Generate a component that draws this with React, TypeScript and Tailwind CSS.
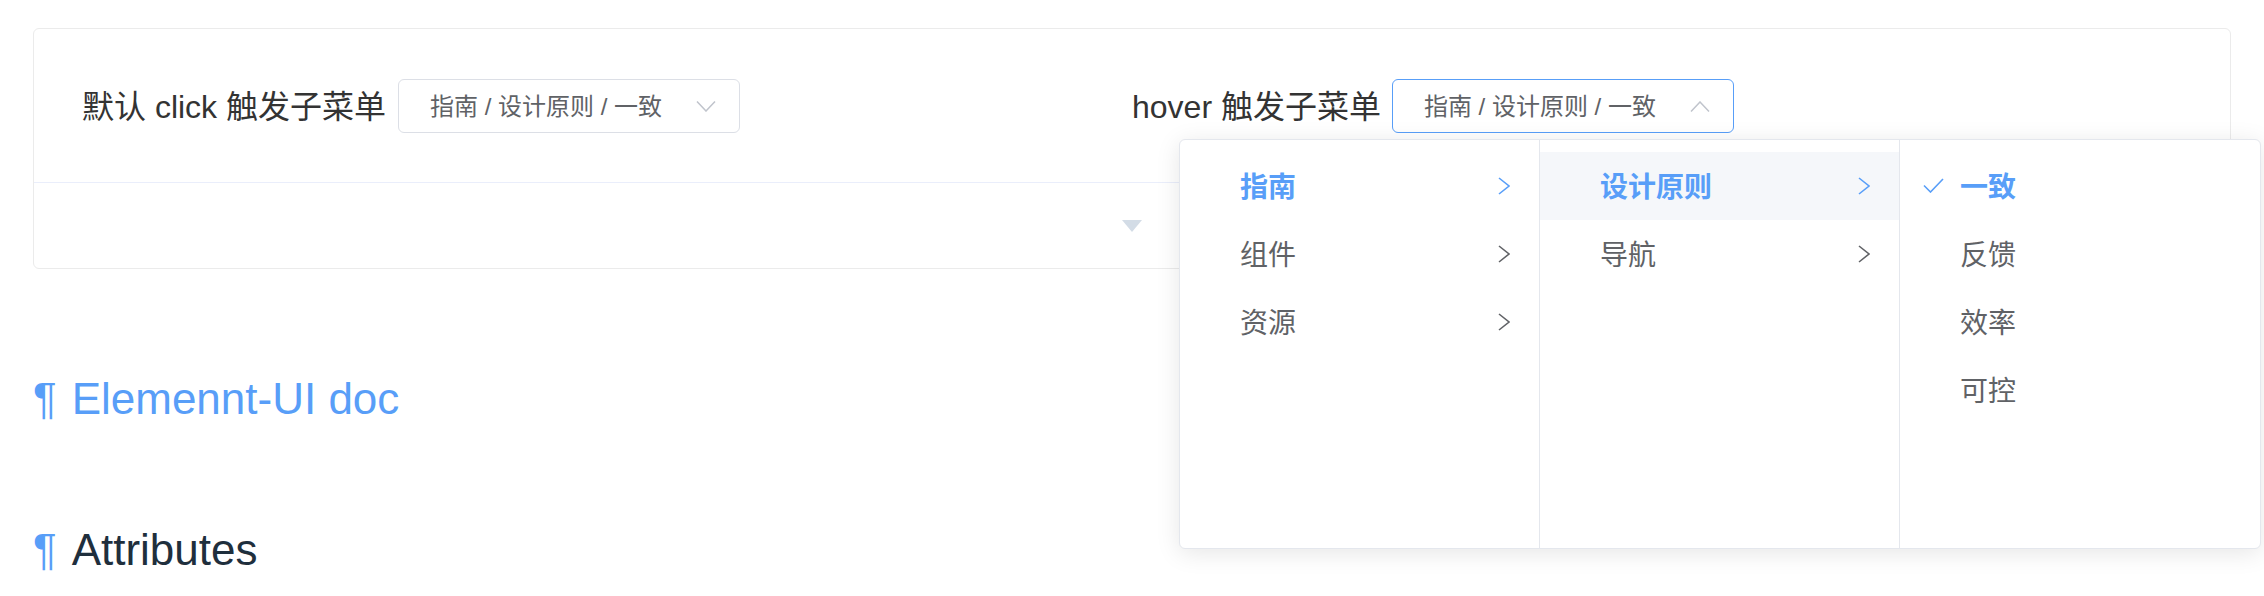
import React from "react";

const BLUE = "#589ef8";

const ArrowRight = ({ color }: { color: string }) => (
  <svg width="12" height="18" viewBox="0 0 12 18" fill="none">
    <path d="M1 1 L11 9 L1 17" stroke={color} strokeWidth="1.6" strokeLinejoin="miter" />
  </svg>
);

const Chevron = ({ up }: { up?: boolean }) => (
  <svg width="20" height="11" viewBox="0 0 20 11" fill="none">
    <path d={up ? "M1 10.5 L10 1 L19 10.5" : "M1 0.5 L10 10 L19 0.5"} stroke="#c0c4cc" strokeWidth="1.5" />
  </svg>
);

const Check = () => (
  <svg width="21" height="15" viewBox="0 0 21 15" fill="none">
    <path d="M1 7.5 L7.5 14 L20 1" stroke={BLUE} strokeWidth="1.6" />
  </svg>
);

type Item = { label: string; active?: boolean; hover?: boolean; arrow?: boolean; check?: boolean };

const columns: Item[][] = [
  [
    { label: "指南", active: true, arrow: true },
    { label: "组件", arrow: true },
    { label: "资源", arrow: true },
  ],
  [
    { label: "设计原则", active: true, hover: true, arrow: true },
    { label: "导航", arrow: true },
  ],
  [
    { label: "一致", active: true, check: true },
    { label: "反馈" },
    { label: "效率" },
    { label: "可控" },
  ],
];

function Select({ focused }: { focused?: boolean }) {
  return (
    <div
      className={
        "flex h-[54px] w-[342px] items-center justify-between rounded-[6px] border bg-white pl-[31px] pr-[23px] " +
        (focused ? "border-[#589ef8]" : "border-[#dcdfe6]")
      }
    >
      <span className="pt-[2px] text-[24px] leading-none text-[#606266]">指南 / 设计原则 / 一致</span>
      <Chevron up={focused} />
    </div>
  );
}

export default function App() {
  return (
    <div className="relative min-h-[596px] w-full bg-white px-[33px] pt-[28px] font-['Liberation_Sans','Noto_Sans_CJK_SC',sans-serif]">
      {/* demo card */}
      <div className="rounded-[6px] border border-[#ebebeb]">
        <div className="grid grid-cols-2 px-[48px] pb-[49px] pt-[50px]">
          <div className="flex h-[54px] items-center">
            <span className="mr-[12px] pt-[2px] text-[32px] leading-none text-[#333333]">默认 click 触发子菜单</span>
            <Select />
          </div>
          <div className="flex h-[54px] items-center">
            <span className="mr-[11px] pt-[2px] text-[32px] leading-none text-[#333333]">hover 触发子菜单</span>
            <Select focused />
          </div>
        </div>
        <div className="flex h-[86px] items-center justify-center border-t border-[#eaeefb]">
          <svg width="20" height="12" viewBox="0 0 20 12">
            <polygon points="0,0 20,0 10,12" fill="#d3dce6" />
          </svg>
        </div>
      </div>

      {/* headings */}
      <h3 className="mt-[97px] text-[44px] font-normal leading-[66px] text-[#589ef8]">
        <span className="mr-[15px]">¶</span>Elemennt-UI doc
      </h3>
      <h3 className="mt-[85px] text-[44px] font-normal leading-[66px] text-[#1f2f3d]">
        <span className="mr-[15px] text-[#589ef8]">¶</span>Attributes
      </h3>

      {/* cascader dropdown */}
      <div className="absolute left-[1179px] top-[139px] flex rounded-[6px] border border-[#e4e7ed] bg-white shadow-[0_4px_24px_rgba(0,0,0,0.1)]">
        {columns.map((col, ci) => (
          <div
            key={ci}
            className={
              "h-[408px] w-[360px] py-[12px] " + (ci < 2 ? "border-r border-[#e4e7ed]" : "")
            }
          >
            {col.map((it) => (
              <div
                key={it.label}
                className={
                  "relative flex h-[68px] items-center justify-between pl-[60px] pr-[29px] " +
                  (it.hover ? "bg-[#f5f7fa]" : "")
                }
              >
                {it.check && (
                  <span className="absolute left-[23px] top-[26px] flex">
                    <Check />
                  </span>
                )}
                <span
                  className={
                    "pt-[3px] text-[28px] leading-none " +
                    (it.active ? "font-semibold text-[#589ef8]" : "text-[#606266]")
                  }
                >
                  {it.label}
                </span>
                {it.arrow && <ArrowRight color={it.active ? BLUE : "#606266"} />}
              </div>
            ))}
          </div>
        ))}
      </div>
    </div>
  );
}
